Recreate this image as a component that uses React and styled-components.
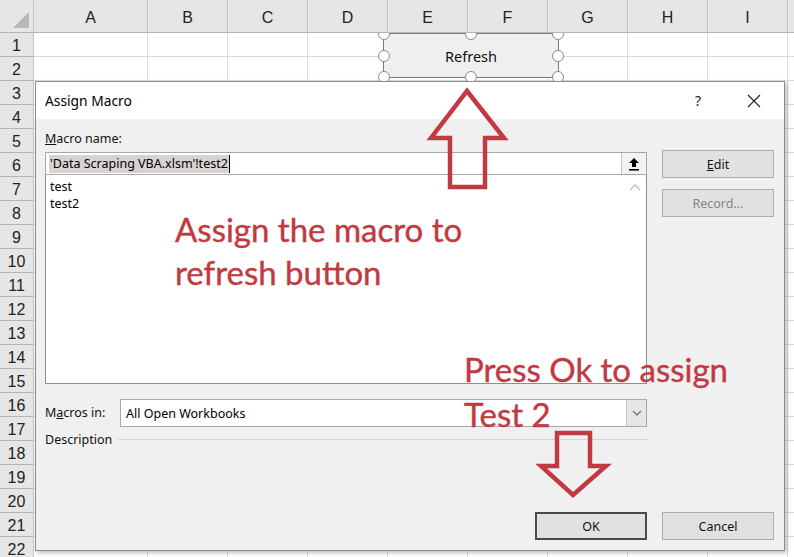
import React from 'react';
import styled, { createGlobalStyle } from 'styled-components';

const GlobalStyle = createGlobalStyle`
  html, body {
    margin: 0;
    padding: 0;
    width: 794px;
    height: 557px;
    overflow: hidden;
    background: #fff;
  }
`;

const RED = '#c23a41';

const Page = styled.div`
  position: relative;
  width: 794px;
  height: 557px;
  overflow: hidden;
  font-family: "Noto Sans", "Open Sans", sans-serif;
`;

const Sheet = styled.div`
  display: grid;
  grid-template-columns: 34px 114px repeat(9, 80px);
  grid-template-rows: 33px;
  grid-auto-rows: 24px;
  font-family: "Liberation Sans", Arial, sans-serif;
`;

const HeadCell = styled.div`
  box-sizing: border-box;
  background: #e6e6e6;
  border-right: 1px solid #c6c6c6;
  border-bottom: 1px solid #b4b4b4;
  color: #222;
  font-size: 16px;
  display: flex;
  align-items: center;
  justify-content: center;
  position: relative;
  padding-top: ${p => (p.$col ? '4px' : '2px')};
`;

const Corner = styled(HeadCell)`
  &::after {
    content: '';
    position: absolute;
    right: 4px;
    bottom: 4px;
    width: 16px;
    height: 16px;
    background: #b8b8b8;
    clip-path: polygon(100% 0, 100% 100%, 0 100%);
  }
`;

const Cell = styled.div`
  box-sizing: border-box;
  border-right: 1px solid #dadada;
  border-bottom: 1px solid #dadada;
`;

const CanvasLayer = styled.div`
  position: absolute;
  left: 34px;
  top: 33px;
  right: 0;
  bottom: 0;
  overflow: hidden;
`;

const ShapeButton = styled.div`
  position: absolute;
  left: 349px;
  top: 0;
  width: 176px;
  height: 45px;
  box-sizing: border-box;
  border: 1px solid #7c7c7c;
  background: #efefef;
  display: flex;
  align-items: center;
  justify-content: center;
  font-size: 14.5px;
  color: #111;
`;

const Handle = styled.span`
  position: absolute;
  width: 12px;
  height: 12px;
  border-radius: 50%;
  border: 1.5px solid #8a8a8a;
  background: #fff;
  box-sizing: border-box;
  left: ${p => p.$x}%;
  top: ${p => p.$y}%;
  transform: translate(-50%, -50%);
`;

const Dialog = styled.div`
  position: absolute;
  left: 35px;
  top: 81px;
  width: 750px;
  height: 470px;
  box-sizing: border-box;
  border: 1px solid #8c8c8c;
  background: #f0f0f0;
  box-shadow: 2px 2px 4px rgba(0, 0, 0, 0.25);
  display: flex;
  flex-direction: column;
  font-size: 12.5px;
  color: #000;
`;

const TitleBar = styled.div`
  height: 37px;
  flex: none;
  background: #fff;
  display: flex;
  align-items: center;
  padding: 0 12px 0 9px;
  font-size: 13.8px;
`;

const TitleActions = styled.div`
  margin-left: auto;
  display: flex;
  gap: 20px;
`;

const TitleButton = styled.div`
  width: 36px;
  height: 30px;
  display: flex;
  align-items: center;
  justify-content: center;
  font-size: 14px;
  color: #222;
`;

const Body = styled.div`
  flex: 1;
  display: grid;
  grid-template-columns: 602px 112px;
  column-gap: 15px;
  padding: 0 10px 10px 9px;
`;

const MainCol = styled.div`
  display: flex;
  flex-direction: column;
`;

const SideCol = styled.div`
  display: flex;
  flex-direction: column;
  gap: 11px;
  padding-top: 31px;
`;

const Label = styled.div`
  height: 20px;
  line-height: 20px;
  margin: ${p => p.$margin || '0'};
  width: ${p => p.$width || 'auto'};
  flex: none;
  color: #111;
`;

const NameField = styled.div`
  height: 23px;
  box-sizing: border-box;
  border: 1px solid #a8a8a8;
  background: #fff;
  display: flex;
  align-items: stretch;
`;

const NameText = styled.div`
  flex: 1;
  display: flex;
  align-items: center;
  padding-left: 3px;
`;

const Selected = styled.span`
  background: #d8d2d2;
  line-height: 18px;
  padding: 0 1px;
  border-right: 1px solid #000;
`;

const UploadButton = styled.div`
  width: 24px;
  border-left: 1px solid #c8c8c8;
  background: #f3f3f3;
  display: flex;
  align-items: center;
  justify-content: center;
`;

const ListBox = styled.div`
  height: 209px;
  box-sizing: border-box;
  border: 1px solid #8e8e8e;
  border-top: none;
  background: #fff;
  padding: 3px 4px;
  position: relative;
  line-height: 17px;
`;

const ScrollUp = styled.div`
  position: absolute;
  right: 3px;
  top: 8px;
  width: 16px;
  height: 12px;
  display: flex;
  justify-content: center;
`;

const FieldRow = styled.div`
  display: flex;
  align-items: center;
  margin-top: ${p => p.$top || '0'};
`;

const Select = styled.div`
  flex: 1;
  height: 28px;
  box-sizing: border-box;
  border: 1px solid #a8a8a8;
  background: #fff;
  display: flex;
  align-items: center;
  padding-left: 5px;
`;

const SelectArrow = styled.div`
  margin-left: auto;
  width: 20px;
  height: 100%;
  box-sizing: border-box;
  border-left: 1px solid #c4c4c4;
  background: #e6e6e6;
  display: flex;
  align-items: center;
  justify-content: center;
`;

const DottedRule = styled.div`
  flex: 1;
  margin-left: 6px;
  border-top: 1px dotted #bcbcbc;
  margin-top: -2px;
`;

const Button = styled.div`
  width: 112px;
  height: 28px;
  flex: none;
  box-sizing: border-box;
  border: ${p => (p.$default ? '2px solid #4a4a4a' : '1px solid #adadad')};
  background: #e1e1e1;
  display: flex;
  align-items: center;
  justify-content: center;
  color: ${p => (p.$disabled ? '#858585' : '#111')};
  margin-top: ${p => (p.$bottom ? 'auto' : '0')};
  align-self: ${p => (p.$end ? 'flex-end' : 'auto')};
`;

const Annotation = styled.div`
  position: absolute;
  left: ${p => p.$x}px;
  top: ${p => p.$y}px;
  color: ${RED};
  font-family: Lato, "Liberation Sans", sans-serif;
  font-size: 33px;
  line-height: ${p => p.$lh}px;
  white-space: nowrap;
  -webkit-text-stroke: 0.4px ${RED};
`;

const Overlay = styled.svg`
  position: absolute;
  left: 0;
  top: 0;
  pointer-events: none;
`;

const columns = ['A', 'B', 'C', 'D', 'E', 'F', 'G', 'H', 'I', ''];
const rows = Array.from({ length: 22 }, (_, i) => i + 1);
const handles = [
  [0, 0], [50, 0], [100, 0],
  [0, 50], [100, 50],
  [0, 100], [50, 100], [100, 100],
];

const App = () => {
  return (
    <>
      <GlobalStyle />
      <Page>
        <Sheet>
          <Corner />
          {columns.map((c, i) => (
            <HeadCell key={'c' + i} $col>{c}</HeadCell>
          ))}
          {rows.map(r => (
            <React.Fragment key={r}>
              <HeadCell>{r}</HeadCell>
              {columns.map((c, i) => <Cell key={i} />)}
            </React.Fragment>
          ))}
        </Sheet>

        <CanvasLayer>
          <ShapeButton>
            Refresh
            {handles.map(([x, y], i) => <Handle key={i} $x={x} $y={y} />)}
          </ShapeButton>
        </CanvasLayer>

        <Dialog>
          <TitleBar>
            Assign Macro
            <TitleActions>
              <TitleButton>?</TitleButton>
              <TitleButton>
                <svg width="14" height="14" viewBox="0 0 14 14">
                  <path d="M1 1 L13 13 M13 1 L1 13" stroke="#222" strokeWidth="1.1" />
                </svg>
              </TitleButton>
            </TitleActions>
          </TitleBar>
          <Body>
            <MainCol>
              <Label $margin="10px 0 3px"><u>M</u>acro name:</Label>
              <NameField>
                <NameText>
                  <Selected>'Data Scraping VBA.xlsm'!test2</Selected>
                </NameText>
                <UploadButton>
                  <svg width="12" height="14" viewBox="0 0 12 14">
                    <path d="M6 1 L11 6 H8 V10 H4 V6 H1 Z" fill="#000" />
                    <rect x="1" y="12" width="10" height="1.6" fill="#000" />
                  </svg>
                </UploadButton>
              </NameField>
              <ListBox>
                <div>test</div>
                <div>test2</div>
                <ScrollUp>
                  <svg width="12" height="8" viewBox="0 0 12 8">
                    <path d="M1 7 L6 2 L11 7" fill="none" stroke="#c0c0c0" strokeWidth="1.4" />
                  </svg>
                </ScrollUp>
              </ListBox>
              <FieldRow $top="15px">
                <Label $width="75px">M<u>a</u>cros in:</Label>
                <Select>
                  All Open Workbooks
                  <SelectArrow>
                    <svg width="10" height="6" viewBox="0 0 10 6">
                      <path d="M1 1 L5 5 L9 1" fill="none" stroke="#666" strokeWidth="1.1" />
                    </svg>
                  </SelectArrow>
                </Select>
              </FieldRow>
              <FieldRow $top="3px">
                <Label>Description</Label>
                <DottedRule />
              </FieldRow>
              <Button $default $bottom $end>OK</Button>
            </MainCol>
            <SideCol>
              <Button><span><u>E</u>dit</span></Button>
              <Button $disabled>Record...</Button>
              <Button $bottom>Cancel</Button>
            </SideCol>
          </Body>
        </Dialog>

        <Annotation $x={175} $y={208} $lh={43}>
          Assign the macro to<br />refresh button
        </Annotation>
        <Annotation $x={464} $y={347} $lh={45}>
          Press Ok to assign<br />Test 2
        </Annotation>

        <Overlay width="794" height="557" viewBox="0 0 794 557">
          <polygon
            points="467,91 504,138 485,138 485,187 450,187 450,138 431,138"
            fill="none"
            stroke={RED}
            strokeWidth="4.5"
            strokeLinejoin="miter"
          />
          <polygon
            points="557,433 590,433 590,466 606,466 573,495 541,466 557,466"
            fill="none"
            stroke={RED}
            strokeWidth="4.5"
            strokeLinejoin="miter"
          />
        </Overlay>
      </Page>
    </>
  );
};

export default App;
